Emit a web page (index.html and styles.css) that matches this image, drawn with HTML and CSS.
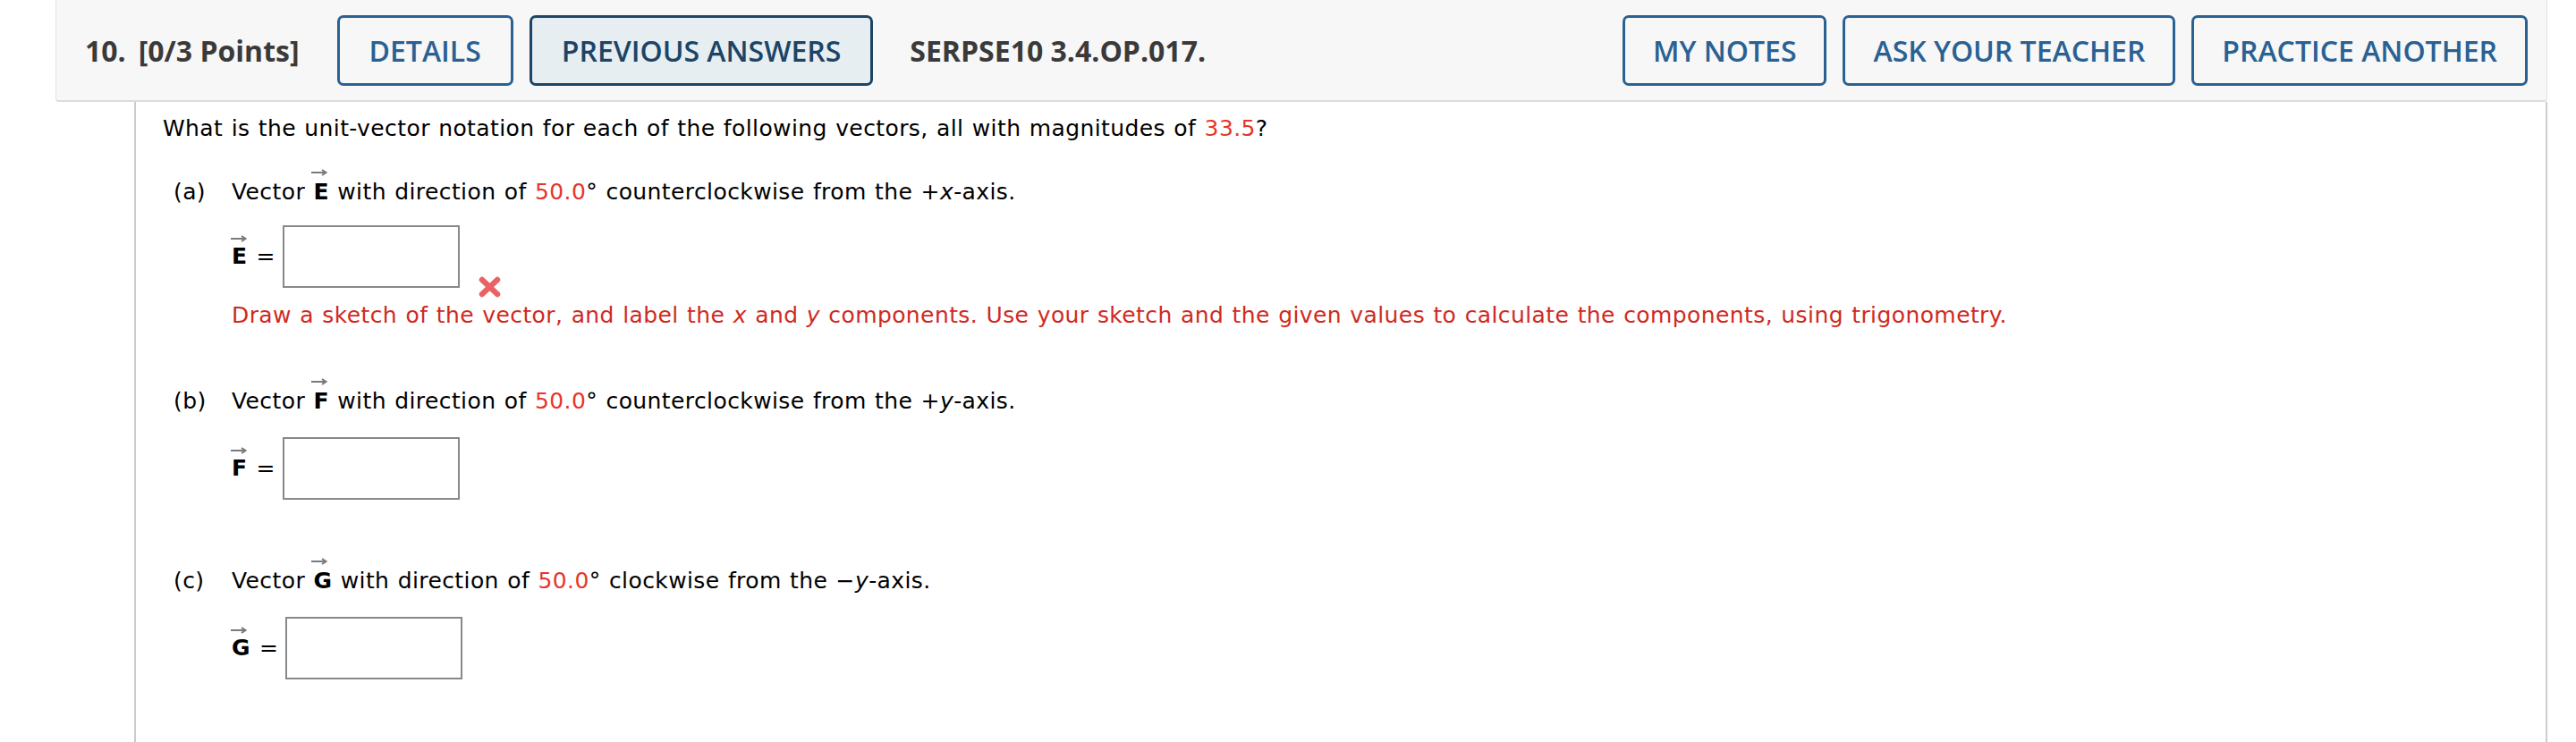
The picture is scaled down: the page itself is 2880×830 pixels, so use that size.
FILE: index.html
```html
<!DOCTYPE html>
<html>
<head>
<meta charset="utf-8">
<link rel="stylesheet" href="styles.css">
</head>
<body>
<div class="header">
  <div class="title"><span class="num">10.</span><span class="pts">[0/3 Points]</span></div>
  <span class="btn">DETAILS</span>
  <span class="btn btn-dark">PREVIOUS ANSWERS</span>
  <span class="code">SERPSE10 3.4.OP.017.</span>
  <span class="spacer"></span>
  <span class="btn">MY NOTES</span>
  <span class="btn">ASK YOUR TEACHER</span>
  <span class="btn">PRACTICE ANOTHER</span>
</div>
<div class="content">
  <p class="question">What is the unit-vector notation for each of the following vectors, all with magnitudes of <span class="val">33.5</span>?</p>

  <div class="part part-a">
    <div class="part-line"><span class="plabel">(a)</span><span>Vector <span class="vec">E<svg class="arrow" viewBox="0 0 18 8" width="18" height="8"><path d="M0 4H16M12 1L16.5 4L12 7" fill="none" stroke="#7a7a7a" stroke-width="2"/></svg></span> with direction of <span class="val">50.0</span>° counterclockwise from the +<i>x</i>-axis.</span></div>
    <div class="ans">
      <span class="vec">E<svg class="arrow" viewBox="0 0 18 8" width="18" height="8"><path d="M0 4H16M12 1L16.5 4L12 7" fill="none" stroke="#7a7a7a" stroke-width="2"/></svg></span><span class="eq">=</span><span class="box"></span>
      <svg class="xmark" viewBox="0 0 27 26" width="27" height="26"><path d="M5 5L22 21M22 5L5 21" stroke="#e86464" stroke-width="6.5" stroke-linecap="round"/></svg>
    </div>
    <p class="feedback">Draw a sketch of the vector, and label the <i>x</i> and <i>y</i> components. Use your sketch and the given values to calculate the components, using trigonometry.</p>
  </div>

  <div class="part part-b">
    <div class="part-line"><span class="plabel">(b)</span><span>Vector <span class="vec">F<svg class="arrow" viewBox="0 0 18 8" width="18" height="8"><path d="M0 4H16M12 1L16.5 4L12 7" fill="none" stroke="#7a7a7a" stroke-width="2"/></svg></span> with direction of <span class="val">50.0</span>° counterclockwise from the +<i>y</i>-axis.</span></div>
    <div class="ans">
      <span class="vec">F<svg class="arrow" viewBox="0 0 18 8" width="18" height="8"><path d="M0 4H16M12 1L16.5 4L12 7" fill="none" stroke="#7a7a7a" stroke-width="2"/></svg></span><span class="eq">=</span><span class="box"></span>
    </div>
  </div>

  <div class="part part-c">
    <div class="part-line"><span class="plabel">(c)</span><span>Vector <span class="vec">G<svg class="arrow" viewBox="0 0 18 8" width="18" height="8"><path d="M0 4H16M12 1L16.5 4L12 7" fill="none" stroke="#7a7a7a" stroke-width="2"/></svg></span> with direction of <span class="val">50.0</span>° clockwise from the −<i>y</i>-axis.</span></div>
    <div class="ans">
      <span class="vec">G<svg class="arrow" viewBox="0 0 18 8" width="18" height="8"><path d="M0 4H16M12 1L16.5 4L12 7" fill="none" stroke="#7a7a7a" stroke-width="2"/></svg></span><span class="eq">=</span><span class="box"></span>
    </div>
  </div>
</div>
</body>
</html>
```

FILE: styles.css
```css
html, body {
  margin: 0;
  padding: 0;
  background: #ffffff;
}
body {
  width: 2880px;
  height: 830px;
  overflow: hidden;
}
.header {
  margin-left: 62px;
  width: 2786px;
  height: 114px;
  box-sizing: border-box;
  background: #f7f7f7;
  border: 1px solid #e2e2e2;
  border-top: none;
  border-bottom: 2px solid #dcdcdc;
  border-radius: 0 0 4px 4px;
  display: flex;
  align-items: center;
  padding: 0 21px 0 32px;
  font-family: "Open Sans", "Liberation Sans", sans-serif;
  font-size: 32px;
}
.title {
  font-weight: 700;
  color: #3a3a3a;
  display: flex;
  margin-right: 42px;
}
.title .num {
  margin-right: 14px;
}
.btn {
  box-sizing: border-box;
  height: 79px;
  display: flex;
  align-items: center;
  padding: 0 33px;
  border: 3px solid #2a6193;
  border-radius: 7px;
  color: #2a6193;
  font-weight: 600;
  margin-right: 18px;
  background: #f7f7f7;
}
.btn-dark {
  border-color: #1c4466;
  color: #1c4466;
  background: #e7eef2;
  margin-right: 41px;
}
.code {
  font-weight: 700;
  color: #3a3a3a;
}
.spacer {
  flex: 1;
}
.header .btn:nth-last-child(-n+3) {
  padding: 0 31px;
}
.header .btn:last-child {
  margin-right: 0;
}
.content {
  margin-left: 150px;
  width: 2698px;
  height: 716px;
  box-sizing: border-box;
  border-left: 2px solid #cccccc;
  border-right: 2px solid #cccccc;
  padding: 15px 0 0 30px;
  font-family: "DejaVu Sans", Verdana, sans-serif;
  font-size: 25px;
  line-height: 30px;
  letter-spacing: 0.4px;
  word-spacing: 1px;
  color: #000000;
}
.question {
  margin: 0;
}
.val {
  color: #e8352b;
}
.part {
  margin-left: 12px;
}
.part-a {
  margin-top: 41px;
}
.part-b {
  margin-top: 66px;
}
.part-c {
  margin-top: 76px;
}
.part-line {
  display: flex;
}
.plabel {
  width: 65px;
  flex: none;
}
.vec {
  position: relative;
  font-weight: 700;
  display: inline-block;
}
.arrow {
  position: absolute;
  left: -2px;
  top: -11px;
}
.ans {
  display: flex;
  align-items: flex-start;
  margin-left: 65px;
  margin-top: 22px;
}
.part-b .ans, .part-c .ans {
  margin-top: 25px;
}
.ans .vec {
  margin-top: 20px;
}
.ans .arrow {
  left: -1px;
  top: -9px;
}
.eq {
  margin: 20px 0 0 10px;
}
.box {
  width: 198px;
  height: 70px;
  box-sizing: border-box;
  border: 2px solid #888888;
  background: #ffffff;
  margin-left: 8px;
}
.xmark {
  margin: 56px 0 0 20px;
}
.feedback {
  margin: 4px 0 0 65px;
  color: #cf2a22;
}
```
